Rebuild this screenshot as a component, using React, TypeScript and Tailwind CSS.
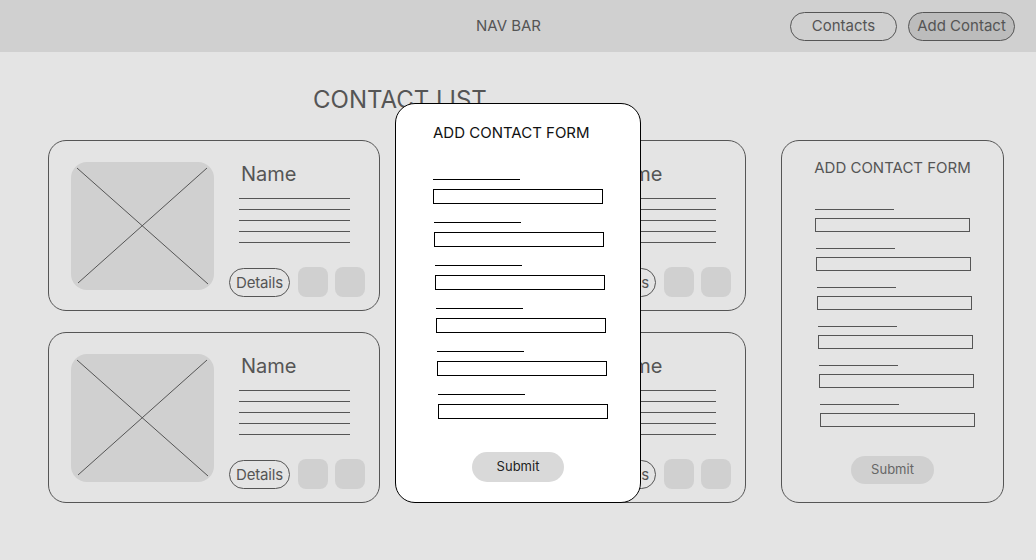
import React from "react";

const shifts = ["ml-0", "ml-[1px]", "ml-[2px]", "ml-[3px]", "ml-[4px]", "ml-[5px]"];

function Card() {
  return (
    <div className="w-[332px] h-[171px] border border-[#555] rounded-[18px] pl-[22px] pt-[21px] flex">
      <div className="w-[143px] h-[128px] bg-[#d0d0d0] rounded-[16px] shrink-0">
        <svg width="143" height="128" viewBox="0 0 143 128">
          <line x1="6" y1="6" x2="137" y2="122" stroke="#555" strokeWidth="1" />
          <line x1="136" y1="6" x2="7" y2="121" stroke="#555" strokeWidth="1" />
        </svg>
      </div>
      <div className="ml-[15px] flex flex-col">
        <div className="ml-[12px] text-[20px] leading-[24px] text-[#555]">Name</div>
        <div className="ml-[10px] mt-[12px] flex flex-col gap-[10px]">
          {[0, 1, 2, 3, 4].map((i) => (
            <div key={i} className="w-[111px] h-px bg-[#555]" />
          ))}
        </div>
        <div className="mt-[24px] flex items-end">
          <div className="w-[61px] h-[29px] border border-[#555] rounded-full flex items-center justify-center text-[15px] tracking-[-0.2px] text-[#555] leading-none">
            Details
          </div>
          <div className="ml-[8px] w-[30px] h-[30px] rounded-[8px] bg-[#d0d0d0]" />
          <div className="ml-[7px] w-[30px] h-[30px] rounded-[8px] bg-[#d0d0d0]" />
        </div>
      </div>
    </div>
  );
}

export default function App() {
  return (
    <div
      className="relative w-[1036px] h-[560px] bg-[#e4e4e4] overflow-hidden"
      style={{ fontFamily: "Inter, 'Noto Sans', sans-serif" }}
    >
      <div className="h-[52px] bg-[#d0d0d0] flex items-center">
        <div className="pl-[476px] text-[15px] text-[#555]">NAV BAR</div>
        <div className="ml-auto pr-[21px] flex gap-[11px]">
          <div className="w-[107px] h-[29px] border border-[#555] rounded-full flex items-center justify-center text-[15px] text-[#555]">
            Contacts
          </div>
          <div className="w-[107px] h-[29px] border border-[#555] rounded-full bg-[#bcbcbc] flex items-center justify-center text-[15px] text-[#555]">
            Add Contact
          </div>
        </div>
      </div>

      <div className="pl-[48px]">
        <div className="mt-[33px] ml-[265px] text-[24px] leading-[30px] text-[#555]">CONTACT LIST</div>
        <div className="mt-[25px] flex">
          <div className="grid grid-cols-2 gap-x-[34px] gap-y-[21px]">
            <Card />
            <Card />
            <Card />
            <Card />
          </div>
          <div className="ml-[35px] w-[223px] h-[363px] border border-[#555] rounded-[18px] flex flex-col pt-[18px]">
            <div className="text-center text-[15px] leading-[18px] text-[#555]">ADD CONTACT FORM</div>
            <div className="mt-[32px] pl-[33px] flex flex-col">
              {[0, 1, 2, 3, 4, 5].map((i) => (
                <div key={i} className={`${shifts[i]} ${i > 0 ? "mt-[16px]" : ""}`}>
                  <div className="w-[79px] h-px bg-[#555]" />
                  <div className="mt-[8px] w-[155px] h-[14px] border border-[#555]" />
                </div>
              ))}
            </div>
            <div className="mt-[29px] self-center w-[83px] h-[28px] rounded-full bg-[#d0d0d0] flex items-center justify-center text-[13px] text-[#666]">
              Submit
            </div>
          </div>
        </div>
      </div>

      <div className="absolute left-[395px] top-[103px] w-[246px] h-[400px] bg-white border border-black rounded-[20px] flex flex-col pt-[20px] pl-[37px]">
        <div className="text-[15px] leading-[18px] text-[#111]">ADD CONTACT FORM</div>
        <div className="mt-[37px] flex flex-col">
          {[0, 1, 2, 3, 4, 5].map((i) => (
            <div key={i} className={`${shifts[i]} ${i > 0 ? "mt-[18px]" : ""}`}>
              <div className="w-[87px] h-px bg-black" />
              <div className="mt-[9px] w-[170px] h-[15px] border border-black" />
            </div>
          ))}
        </div>
        <div className="mt-[33px] ml-[39px] w-[92px] h-[30px] rounded-full bg-[#d9d9d9] flex items-center justify-center text-[13px] text-[#222]">
          Submit
        </div>
      </div>
    </div>
  );
}
